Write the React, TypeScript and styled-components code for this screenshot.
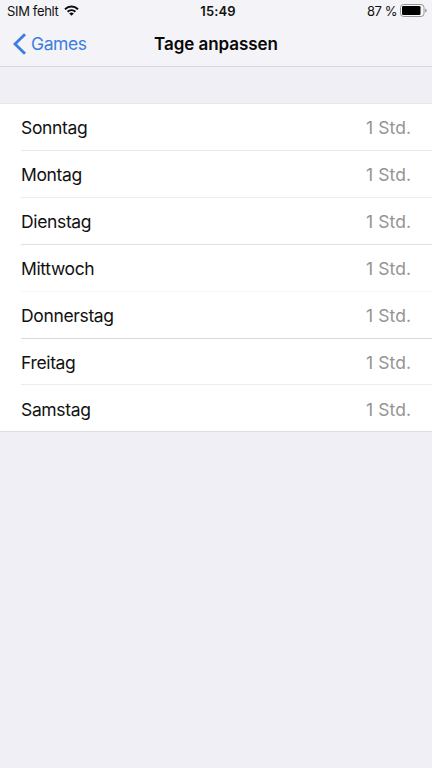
import React from 'react';
import styled, { createGlobalStyle } from 'styled-components';

const GlobalStyle = createGlobalStyle`
  * { box-sizing: border-box; }
  body { margin: 0; background: #efeff5; }
`;

const Screen = styled.main`
  min-height: 768px;
  width: 432px;
  background: #efeff5;
  color: #111;
  font-family: Inter, 'Liberation Sans', sans-serif;
  overflow: hidden;
`;

const Header = styled.header`
  height: 67px;
  background: #f4f4f8;
  border-bottom: 1px solid #d6d6db;
`;

const StatusBar = styled.div`
  height: 22px;
  display: grid;
  grid-template-columns: 1fr auto 1fr;
  align-items: center;
  padding: 0 5px 0 7px;
  font-size: 13px;
  line-height: 22px;
`;

const StatusGroup = styled.div<{ $end?: boolean }>`
  display: flex;
  align-items: center;
  justify-content: ${({ $end }) => ($end ? 'flex-end' : 'flex-start')};
  gap: ${({ $end }) => ($end ? '3px' : '6px')};
  letter-spacing: ${({ $end }) => ($end ? '-0.45px' : '-0.35px')};

  svg { margin-bottom: 2px; }
`;

const Clock = styled.time`
  margin-left: 2px;
  font-size: 13px;
  font-weight: 600;
  letter-spacing: 0.1px;
`;

const NavBar = styled.nav`
  height: 44px;
  display: grid;
  grid-template-columns: 1fr auto 1fr;
  align-items: center;
  padding: 0 12px;
`;

const BackButton = styled.button`
  display: flex;
  align-items: center;
  justify-self: start;
  gap: 4px;
  padding: 0;
  border: 0;
  background: none;
  color: #3b7de0;
  font: 400 17.5px/24px Inter, 'Liberation Sans', sans-serif;
  letter-spacing: -0.4px;
`;

const Title = styled.h1`
  margin: 0;
  font-size: 17px;
  line-height: 24px;
  font-weight: 600;
  letter-spacing: -0.05px;
  color: #080808;
`;

const DayList = styled.ul`
  margin: 36px 0 0;
  padding: 0 0 0 21px;
  list-style: none;
  background: #fff;
  border-top: 1px solid #e7e7eb;
  border-bottom: 1px solid #dddde2;
`;

const DayRow = styled.li<{ $height: number; $line: string }>`
  height: ${({ $height }) => $height}px;
  display: flex;
  align-items: center;
  justify-content: space-between;
  padding: 2px 21px 0 0;
  border-bottom: 1px solid ${({ $line }) => $line};
  font-size: 17.5px;
  line-height: 24px;
  letter-spacing: -0.35px;

  &:last-child { border-bottom: 0; padding-top: 3px; }
`;

const Limit = styled.span`
  color: #949494;
  letter-spacing: 0.05px;
`;

const days = [
  { name: 'Sonntag', height: 47, line: '#e9e9eb' },
  { name: 'Montag', height: 47, line: '#ededef' },
  { name: 'Dienstag', height: 47, line: '#e0e0e2' },
  { name: 'Mittwoch', height: 47, line: '#f5f5f6' },
  { name: 'Donnerstag', height: 47, line: '#dadadc' },
  { name: 'Freitag', height: 46, line: '#ececee' },
  { name: 'Samstag', height: 46, line: '#fff' },
];

const WifiIcon = () => (
  <svg width="15" height="11" viewBox="0 0 15 11" fill="none" stroke="#090909" strokeWidth="2">
    <path d="M1 4.2C4.8 .6 10.2 .6 14 4.2" />
    <path d="M3.6 6.8C5.9 4.7 9.1 4.7 11.4 6.8" />
    <path d="M7.5 10.8 5.2 8.4q2.3-1.9 4.6 0Z" fill="#090909" stroke="none" />
  </svg>
);

const BatteryIcon = () => (
  <svg width="27" height="13" viewBox="0 0 27 13">
    <rect x=".5" y=".5" width="23.5" height="12" rx="3" fill="#f8f8f9" stroke="#96969a" />
    <rect x="2" y="2" width="18.5" height="9" rx="1.3" fill="#000" />
    <path d="M25.2 4.5q1.5.6 1.5 2t-1.5 2Z" fill="#96969a" />
  </svg>
);

const BackIcon = () => (
  <svg width="15" height="22" viewBox="0 0 15 22" fill="none">
    <path d="M13 1.2 3 11 13 20.8" stroke="#3b7de0" strokeWidth="2.8" />
  </svg>
);

export default function App() {
  return (
    <Screen>
      <GlobalStyle />
      <Header>
        <StatusBar>
          <StatusGroup>SIM fehlt<WifiIcon /></StatusGroup>
          <Clock>15:49</Clock>
          <StatusGroup $end>87 %<BatteryIcon /></StatusGroup>
        </StatusBar>
        <NavBar>
          <BackButton type="button" aria-label="Games"><BackIcon />Games</BackButton>
          <Title>Tage anpassen</Title>
        </NavBar>
      </Header>
      <DayList>
        {days.map(({ name, height, line }) => (
          <DayRow key={name} $height={height} $line={line}>
            <span>{name}</span>
            <Limit>1 Std.</Limit>
          </DayRow>
        ))}
      </DayList>
    </Screen>
  );
}
